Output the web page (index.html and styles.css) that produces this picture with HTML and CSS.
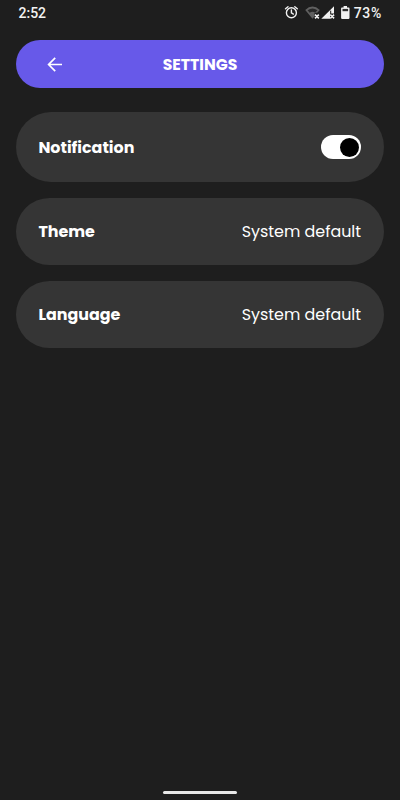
FILE: index.html
```html
<!DOCTYPE html>
<html lang="en">
<head>
<meta charset="utf-8">
<title>Settings</title>
<link rel="stylesheet" href="styles.css">
</head>
<body>
<div class="status">
  <span class="time">2:52</span>
  <svg class="status-icons" width="66" height="18" viewBox="0 0 66 18">
    <g fill="none" stroke="#f2f2f2" stroke-width="1.4" stroke-linecap="round">
      <circle cx="7.4" cy="8.7" r="5"/>
      <path d="M7.4 5.9v3l2 1.2M1.5 4.7l2.5-2M13.3 4.7l-2.5-2"/>
    </g>
    <path d="M21.2 5.9Q28.5-.8 35.8 5.9L33.3 8.8H30.5v3.4l-2 2.6z" fill="#606060"/>
    <path d="M23.6 6.2Q28.5 2.6 33.4 6.2L31.3 8.5Q28.5 6.7 25.7 8.7z" fill="#282828"/>
    <path d="M50 2.3v7.2h-3.6v5.2H37.3z" fill="#f2f2f2"/>
    <path d="M46.7 6.7v8" stroke="#1e1e1e" stroke-width="1"/>
    <path d="M31 10.6l3.8 3.8m0-3.8L31 14.4M46.3 10.6l3.8 3.8m0-3.8l-3.8 3.8" stroke="#f2f2f2" stroke-width="1.5"/>
    <path d="M59.6 2h3.4v1.4h1.7q.8 0 .8.8v9.9q0 .8-.8.8h-6.8q-.8 0-.8-.8V4.2q0-.8.8-.8h1.7z" fill="#f2f2f2"/>
    <path d="M58.5 4.9h5.6v2.3h-5.6z" fill="#303030"/>
  </svg>
  <span class="percent">73%</span>
</div>
<header class="header">
  <svg class="back" width="16" height="16" viewBox="0 0 16 16" fill="none" stroke="#fff" stroke-width="1.7"><path d="M15 8.5H1.8M8.2 1.9L1.6 8.5l6.6 6.6"/></svg>
  <h1 class="title">SETTINGS</h1>
</header>
<main class="cards">
  <section class="card card-tall"><span class="label">Notification</span><span class="toggle"><span class="knob"></span></span></section>
  <section class="card"><span class="label">Theme</span><span class="value">System default</span></section>
  <section class="card"><span class="label">Language</span><span class="value">System default</span></section>
</main>
<div class="home"></div>
</body>
</html>
```
FILE: styles.css
```css
* { box-sizing: border-box; }
body {
  margin: 0;
  height: 800px;
  padding: 0 16px 6px;
  display: flex;
  flex-direction: column;
  overflow: hidden;
  background: #1e1e1e;
  color: #fff;
  font-family: Poppins, Inter, sans-serif;
}
.status {
  height: 40px;
  padding: 4px 2px 0 2.5px;
  display: flex;
  align-items: flex-start;
  font: 500 14px/18px Roboto, sans-serif;
  color: #f2f2f2;
}
.time { flex: 1; }
.status-icons { margin-right: 3.7px; }
.percent { letter-spacing: 0.7px; }
.header {
  height: 48px;
  border-radius: 24px;
  background: #6759e9;
  display: grid;
  grid-template-columns: 47px 1fr 47px;
  align-items: center;
}
.back { justify-self: end; }
.title {
  margin: 0;
  padding-top: 1px;
  text-align: center;
  font-size: 15.7px;
  line-height: 24px;
  font-weight: 700;
}
.cards {
  flex: 1;
  padding-top: 24px;
  display: flex;
  flex-direction: column;
  gap: 16px;
}
.card {
  height: 67px;
  padding: 0 23px 0 22.4px;
  border-radius: 35px;
  background: #353535;
  display: flex;
  align-items: center;
  justify-content: space-between;
  line-height: 24px;
}
.card-tall { height: 70px; }
.card-tall .label { padding-top: 1px; }
.label { font-size: 15.9px; font-weight: 700; }
.value { font-size: 15.9px; font-weight: 400; }
.toggle {
  width: 40px;
  height: 24px;
  padding: 0 2px;
  border-radius: 12px;
  background: #fff;
  display: flex;
  align-items: center;
  justify-content: flex-end;
}
.knob { width: 19px; height: 19px; border-radius: 50%; background: #000; }
.home { width: 74px; height: 3px; align-self: center; border-radius: 2px; background: #e8e8e8; }
```
